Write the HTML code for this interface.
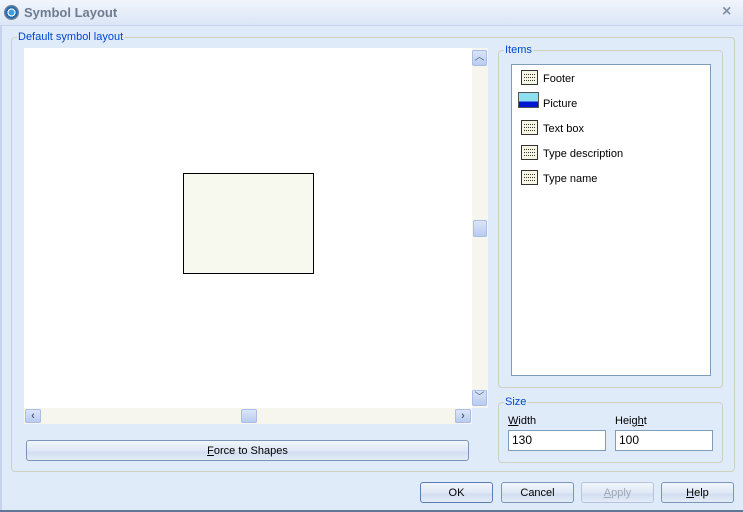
<!DOCTYPE html>
<html><head><style>
*{box-sizing:border-box}
body{margin:0;width:743px;height:512px;overflow:hidden;background:#e0ebfa;font-family:Tahoma,"Liberation Sans",sans-serif;font-size:11px;position:relative}
.a{position:absolute}
.gb{position:absolute;border:1px solid #d0d0bf;border-radius:4px}
.lg{position:absolute;background:#e0ebfa;color:#0046d5;padding:0 1px;top:-7px;left:5px;line-height:13px}
.btn{position:absolute;height:21px;border:1px solid #7b94b8;border-radius:3px;background:linear-gradient(#f2f6fc,#dfe8f5 50%,#d2def0 60%,#e4ecf7);text-align:center;line-height:20px;color:#000}
.ic{position:absolute;left:9px;width:17px;height:15px;border:1px solid #333;background:#f7f6e4}
.ic i{position:absolute;left:2px;right:2px;height:1px;border-top:1px dotted #333}
.it{position:absolute;left:31px}
.sb{background:linear-gradient(#dbe5f8,#b9cbef);border:1px solid #a9bde6;border-radius:2px}
.inp{position:absolute;height:21px;border:1px solid #7f9db9;background:#fff;padding-left:3px;line-height:19px;font-size:12px}
</style></head><body>
<div class="a" style="left:0;top:0;width:743px;height:26px;background:linear-gradient(#f1f5fc,#dbe6f6);border-bottom:1px solid #c5d4ec"></div>
<div class="a" style="left:4px;top:5px;width:15px;height:15px;border-radius:50%;background:radial-gradient(circle at 50% 50%,#3aa0e6 0 3px,#fff 3px 4px,#1e6cb8 4px 6px,#6c7c90 6px)"></div>
<div class="a" style="left:24px;top:5px;font-size:13px;font-weight:bold;color:#6e7c8e">Symbol Layout</div>
<div class="a" style="left:722px;top:3px;font-size:16px;font-weight:bold;color:#8391a3">×</div>
<div class="a" style="left:0;top:26px;width:2px;height:486px;background:#c5d4ec"></div>
<div class="a" style="left:0;top:508px;width:743px;height:4px;border-bottom:2px solid #607896"></div>
<div class="gb" style="left:11px;top:37px;width:724px;height:435px"><div class="lg" style="left:5px">Default symbol layout</div></div>
<div class="a" style="left:24px;top:48px;width:448px;height:360px;background:#fff"></div>
<div class="a" style="left:183px;top:173px;width:131px;height:101px;border:1px solid #000;background:#f8f9ee"></div>
<div class="a" style="left:472px;top:48px;width:16px;height:360px;background:#f6f5ee"></div>
<div class="a sb" style="left:472px;top:50px;width:15px;height:16px;text-align:center;color:#4d6185;font-size:10px;line-height:14px">︿</div>
<div class="a sb" style="left:473px;top:220px;width:14px;height:17px"></div>
<div class="a sb" style="left:472px;top:390px;width:15px;height:16px;text-align:center;color:#4d6185;font-size:10px;line-height:14px">﹀</div>
<div class="a" style="left:24px;top:408px;width:448px;height:16px;background:#f6f5ee"></div>
<div class="a sb" style="left:25px;top:409px;width:16px;height:14px;text-align:center;color:#4d6185;font-weight:bold;line-height:12px">‹</div>
<div class="a sb" style="left:241px;top:409px;width:16px;height:14px"></div>
<div class="a sb" style="left:455px;top:409px;width:16px;height:14px;text-align:center;color:#4d6185;font-weight:bold;line-height:12px">›</div>
<div class="btn" style="left:26px;top:440px;width:443px"><u>F</u>orce to Shapes</div>
<div class="gb" style="left:498px;top:50px;width:225px;height:338px"><div class="lg">Items</div></div>
<div class="a" style="left:511px;top:64px;width:200px;height:312px;background:#fff;border:1px solid #7f9db9">
<div class="ic" style="top:5px"><i style="top:3px"></i><i style="top:6px"></i><i style="top:9px"></i></div><div class="it" style="top:8px">Footer</div>
<div class="a" style="left:6px;top:27px;width:21px;height:16px;border:1px solid #555;background:linear-gradient(#8ee0f0 60%,#0018d0 60%)"></div><div class="it" style="top:33px">Picture</div>
<div class="ic" style="top:55px"><i style="top:3px"></i><i style="top:6px"></i><i style="top:9px"></i></div><div class="it" style="top:58px">Text box</div>
<div class="ic" style="top:80px"><i style="top:3px"></i><i style="top:6px"></i><i style="top:9px"></i></div><div class="it" style="top:83px">Type description</div>
<div class="ic" style="top:105px"><i style="top:3px"></i><i style="top:6px"></i><i style="top:9px"></i></div><div class="it" style="top:108px">Type name</div>
</div>
<div class="gb" style="left:498px;top:402px;width:225px;height:61px"><div class="lg">Size</div></div>
<div class="a" style="left:508px;top:415px"><u>W</u>idth</div>
<div class="inp" style="left:508px;top:430px;width:98px">130</div>
<div class="a" style="left:615px;top:415px">Heig<u>h</u>t</div>
<div class="inp" style="left:615px;top:430px;width:98px">100</div>
<div class="btn" style="left:420px;top:482px;width:73px;border-color:#5a7eb5">OK</div>
<div class="btn" style="left:501px;top:482px;width:73px">Cancel</div>
<div class="btn" style="left:581px;top:482px;width:73px;color:#a0a8b4;border-color:#b5c4dc"><u>A</u>pply</div>
<div class="btn" style="left:661px;top:482px;width:73px"><u>H</u>elp</div>
</body></html>
